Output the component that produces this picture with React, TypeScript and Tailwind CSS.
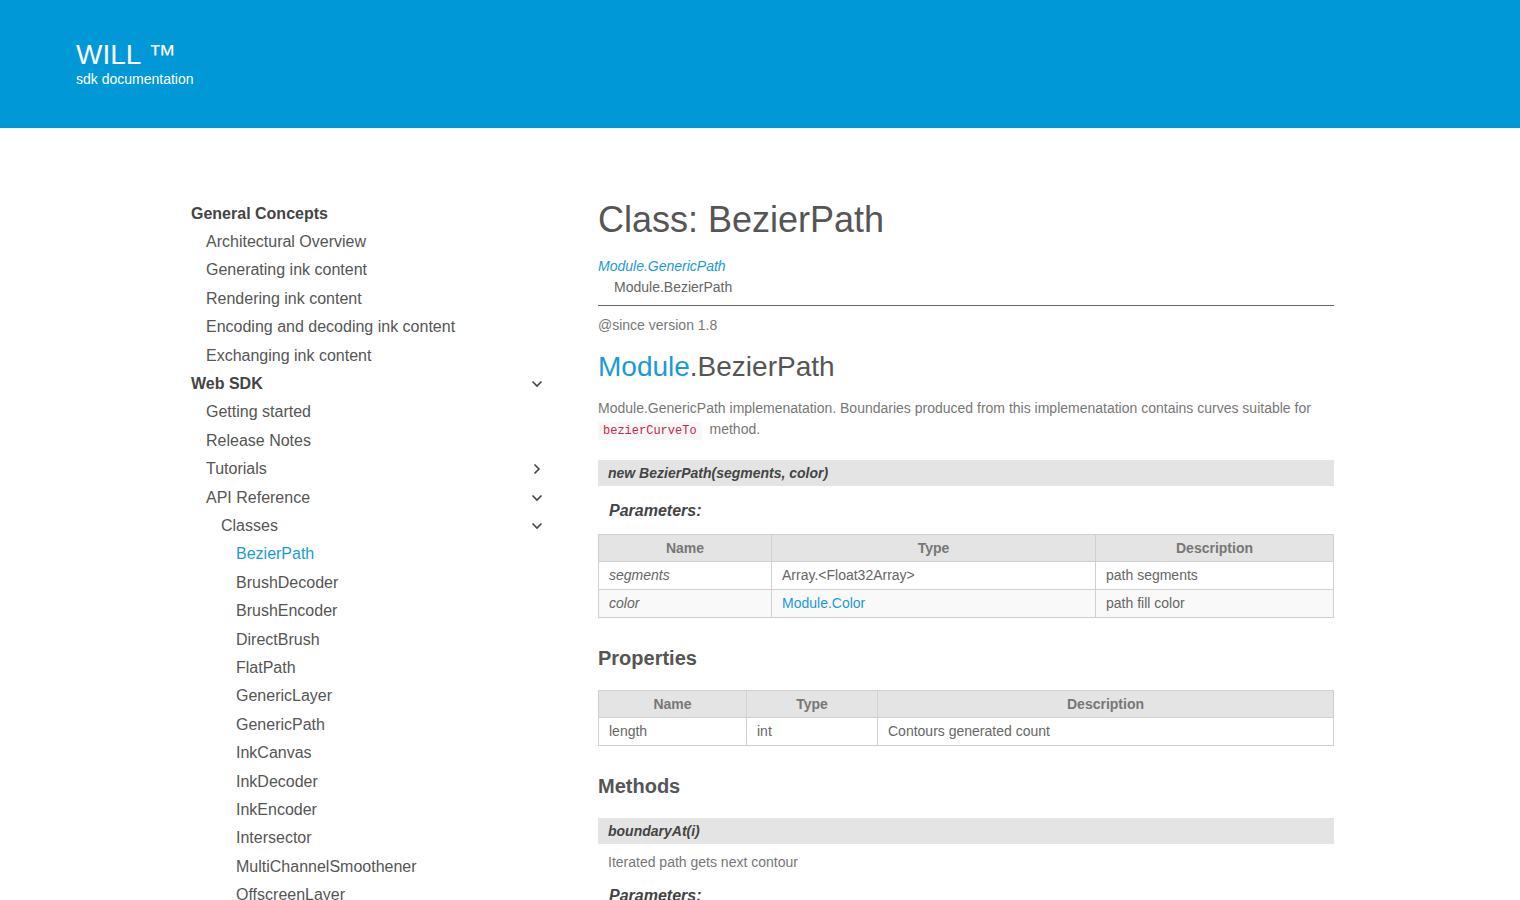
import { ReactNode } from 'react';

type NavItem = {
  label: string;
  level: 0 | 1 | 2 | 3;
  chevron?: 'down' | 'right';
  active?: boolean;
};

const NAV: NavItem[] = [
  { label: 'General Concepts', level: 0 },
  { label: 'Architectural Overview', level: 1 },
  { label: 'Generating ink content', level: 1 },
  { label: 'Rendering ink content', level: 1 },
  { label: 'Encoding and decoding ink content', level: 1 },
  { label: 'Exchanging ink content', level: 1 },
  { label: 'Web SDK', level: 0, chevron: 'down' },
  { label: 'Getting started', level: 1 },
  { label: 'Release Notes', level: 1 },
  { label: 'Tutorials', level: 1, chevron: 'right' },
  { label: 'API Reference', level: 1, chevron: 'down' },
  { label: 'Classes', level: 2, chevron: 'down' },
  { label: 'BezierPath', level: 3, active: true },
  { label: 'BrushDecoder', level: 3 },
  { label: 'BrushEncoder', level: 3 },
  { label: 'DirectBrush', level: 3 },
  { label: 'FlatPath', level: 3 },
  { label: 'GenericLayer', level: 3 },
  { label: 'GenericPath', level: 3 },
  { label: 'InkCanvas', level: 3 },
  { label: 'InkDecoder', level: 3 },
  { label: 'InkEncoder', level: 3 },
  { label: 'Intersector', level: 3 },
  { label: 'MultiChannelSmoothener', level: 3 },
  { label: 'OffscreenLayer', level: 3 },
];

const INDENT = ['pl-0', 'pl-[15px]', 'pl-[30px]', 'pl-[45px]'];

function Chevron({ dir }: { dir: 'down' | 'right' }) {
  return (
    <svg width="14" height="14" viewBox="0 0 14 14" fill="none" stroke="#444" strokeWidth="1.6">
      {dir === 'down' ? <path d="M2.5 4.5 L7 9 L11.5 4.5" /> : <path d="M4.5 2.5 L9 7 L4.5 11.5" />}
    </svg>
  );
}

function Sidebar() {
  return (
    <nav className="-mt-[0.5px] w-[360px] shrink-0">
      {NAV.map((item) => (
        <div
          key={item.label}
          className={`flex h-[28.4px] items-center justify-between pr-[7px] text-[16px] ${INDENT[item.level]} ${
            item.level === 0 ? 'font-bold text-[#444]' : item.active ? 'text-[#1a9bd7]' : 'text-[#555]'
          }`}
        >
          <span>{item.label}</span>
          {item.chevron && <Chevron dir={item.chevron} />}
        </div>
      ))}
    </nav>
  );
}

function SignatureBar({ children }: { children: ReactNode }) {
  return (
    <div className="flex h-[26px] items-center bg-[#e4e4e4] px-[10px] text-[14px] font-bold italic text-[#444]">
      {children}
    </div>
  );
}

function DocTable({ cols, rows }: { cols: { name: string; w: string }[]; rows: ReactNode[][] }) {
  return (
    <table className="w-full border-collapse text-[14px]">
      <thead>
        <tr className="bg-[#e4e4e4]">
          {cols.map((c) => (
            <th key={c.name} className={`${c.w} h-[27px] border border-[#d0d0d0] font-bold text-[#777]`}>
              {c.name}
            </th>
          ))}
        </tr>
      </thead>
      <tbody>
        {rows.map((row, i) => (
          <tr key={i} className={i % 2 === 1 ? 'bg-[#f9f9f9]' : 'bg-white'}>
            {row.map((cell, j) => (
              <td key={j} className="h-[28px] border border-[#d0d0d0] px-[10px] text-[#666]">
                {cell}
              </td>
            ))}
          </tr>
        ))}
      </tbody>
    </table>
  );
}

function Content() {
  return (
    <main className="w-[736px] shrink-0 text-[#777]">
      <h1 className="h-[40px] text-[36px] leading-[40px] text-[#555]">Class: BezierPath</h1>

      <div className="mt-[16px] text-[14px] leading-[21px]">
        <div className="italic text-[#1a9bd7]">Module.GenericPath</div>
        <div className="pl-[16px] text-[#666]">Module.BezierPath</div>
      </div>

      <hr className="mt-[7px] border-t border-[#666]" />

      <p className="mt-[9px] text-[14px] leading-[21px]">@since version 1.8</p>

      <h2 className="mt-[14px] text-[28px] leading-[34px] text-[#555]">
        <span className="text-[#1a9bd7]">Module</span>.BezierPath
      </h2>

      <p className="mt-[14px] text-[14px] leading-[21px]">
        Module.GenericPath implemenatation. Boundaries produced from this implemenatation contains curves suitable for
        <br />
        <code className="mr-[4px] rounded-[3px] bg-[#f7f7f7] px-[5px] py-[2px] font-['Liberation_Mono',monospace] text-[12px] text-[#c7254e]">
          bezierCurveTo
        </code>{' '}
        method.
      </p>

      <div className="mt-[18px]">
        <SignatureBar>new BezierPath(segments, color)</SignatureBar>
      </div>

      <h4 className="mt-[15px] pl-[11px] text-[16px] leading-[20px] font-bold italic text-[#444]">Parameters:</h4>

      <div className="mt-[13px]">
        <DocTable
          cols={[
            { name: 'Name', w: 'w-[173px]' },
            { name: 'Type', w: 'w-[324px]' },
            { name: 'Description', w: '' },
          ]}
          rows={[
            [<span className="italic">segments</span>, 'Array.<Float32Array>', 'path segments'],
            [<span className="italic">color</span>, <span className="text-[#1a9bd7]">Module.Color</span>, 'path fill color'],
          ]}
        />
      </div>

      <h3 className="mt-[28px] text-[20px] leading-[24px] font-bold text-[#555]">Properties</h3>

      <div className="mt-[20px]">
        <DocTable
          cols={[
            { name: 'Name', w: 'w-[148px]' },
            { name: 'Type', w: 'w-[131px]' },
            { name: 'Description', w: '' },
          ]}
          rows={[['length', 'int', 'Contours generated count']]}
        />
      </div>

      <h3 className="mt-[28px] text-[20px] leading-[24px] font-bold text-[#555]">Methods</h3>

      <div className="mt-[20px]">
        <SignatureBar>boundaryAt(i)</SignatureBar>
      </div>

      <p className="mt-[8px] pl-[10px] text-[14px] leading-[21px]">Iterated path gets next contour</p>

      <h4 className="mt-[13px] pl-[11px] text-[16px] leading-[20px] font-bold italic text-[#444]">Parameters:</h4>
    </main>
  );
}

export default function App() {
  return (
    <div className="h-[900px] overflow-hidden bg-white font-['Liberation_Sans',Arial,sans-serif]">
      <header className="flex h-[128px] flex-col bg-[#0098d6] pl-[76px] pt-[40px] text-white">
        <div className="text-[28px] leading-[30px]">WILL &#8482;</div>
        <div className="text-[14px] leading-[18px]">sdk documentation</div>
      </header>

      <div className="flex gap-[47px] pl-[191px] pt-[72px]">
        <Sidebar />
        <Content />
      </div>
    </div>
  );
}
